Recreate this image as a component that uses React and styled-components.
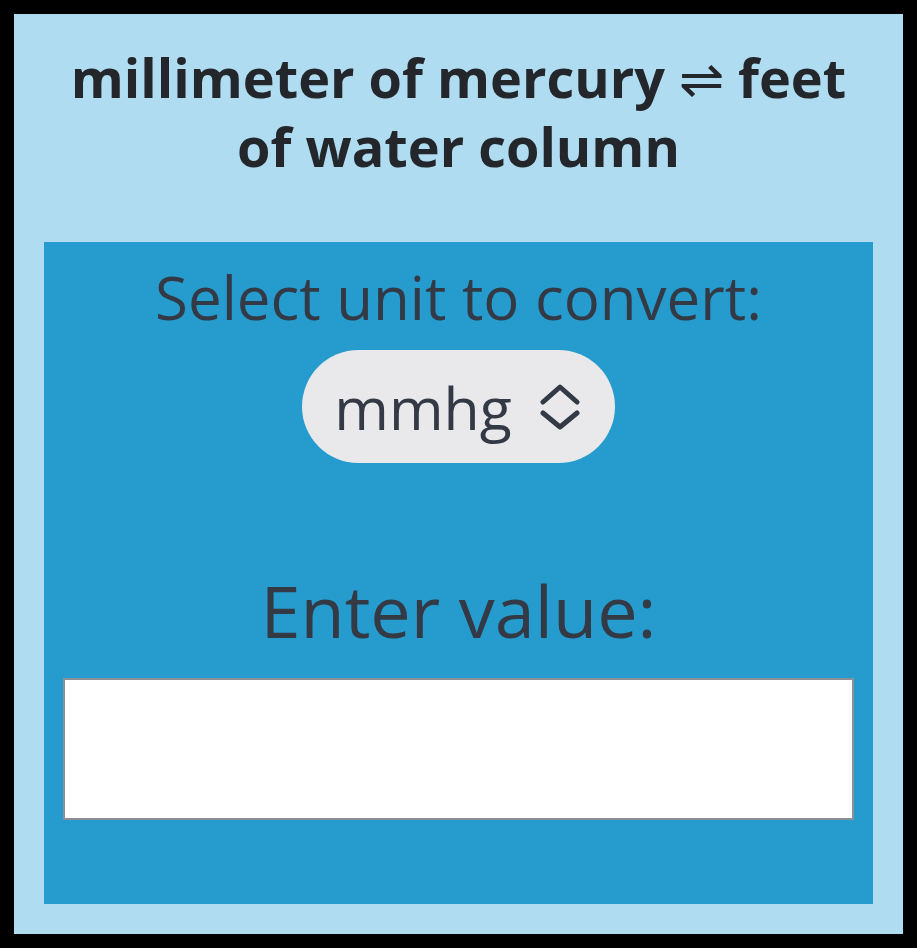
import React from "react";
import styled, { createGlobalStyle } from "styled-components";

const Global = createGlobalStyle`
  html, body { margin: 0; padding: 0; background: #000; }
  body { font-family: "Open Sans", "Noto Sans", sans-serif; }
`;

const Frame = styled.div`
  width: 917px;
  height: 948px;
  box-sizing: border-box;
  padding: 14px;
  background: #000;
`;

const Card = styled.div`
  height: 100%;
  box-sizing: border-box;
  background: #afdcf0;
  padding: 0 30px;
  display: flex;
  flex-direction: column;
`;

const Title = styled.h1`
  margin: 0;
  height: 228px;
  box-sizing: border-box;
  padding-top: 29px;
  font-size: 54px;
  font-weight: 700;
  line-height: 69px;
  color: #23262b;
  text-align: center;
`;

const Arrow = styled.span`
  font-weight: 400;
`;

const Panel = styled.div`
  flex: 1;
  margin-bottom: 30px;
  background: #269cce;
  padding: 20px 19px 0;
  display: flex;
  flex-direction: column;
  align-items: center;
`;

const Label = styled.div`
  font-size: ${(p) => p.$size}px;
  line-height: ${(p) => p.$lh}px;
  color: #333a45;
  text-align: center;
  margin-bottom: ${(p) => p.$mb}px;
`;

const Select = styled.div`
  display: flex;
  align-items: center;
  gap: 28px;
  height: 113px;
  box-sizing: border-box;
  padding: 0 35px 0 32px;
  border-radius: 57px;
  background: #e9e9ec;
  color: #333a45;
  font-size: 59px;
  margin-bottom: 104px;
`;

const Chevrons = () => (
  <svg width="40" height="48" viewBox="0 0 40 48" fill="none" stroke="#333a45" strokeWidth="5" strokeLinecap="round" strokeLinejoin="round">
    <path d="M3 19 L20 4 L37 19" />
    <path d="M3 30 L20 44 L37 30" />
  </svg>
);

const Input = styled.input`
  width: 100%;
  height: 142px;
  box-sizing: border-box;
  border: 2px solid #8b8f98;
  background: #fff;
  outline: none;
`;

export default function App() {
  return (
    <>
      <Global />
      <Frame>
        <Card>
          <Title>
            millimeter of mercury <Arrow>⇌</Arrow> feet of water column
          </Title>
          <Panel>
            <Label $size={60} $lh={70} $mb={18}>Select unit to convert:</Label>
            <Select>
              <span>mmhg</span>
              <Chevrons />
            </Select>
            <Label $size={72} $lh={86} $mb={25}>Enter value:</Label>
            <Input type="text" />
          </Panel>
        </Card>
      </Frame>
    </>
  );
}
